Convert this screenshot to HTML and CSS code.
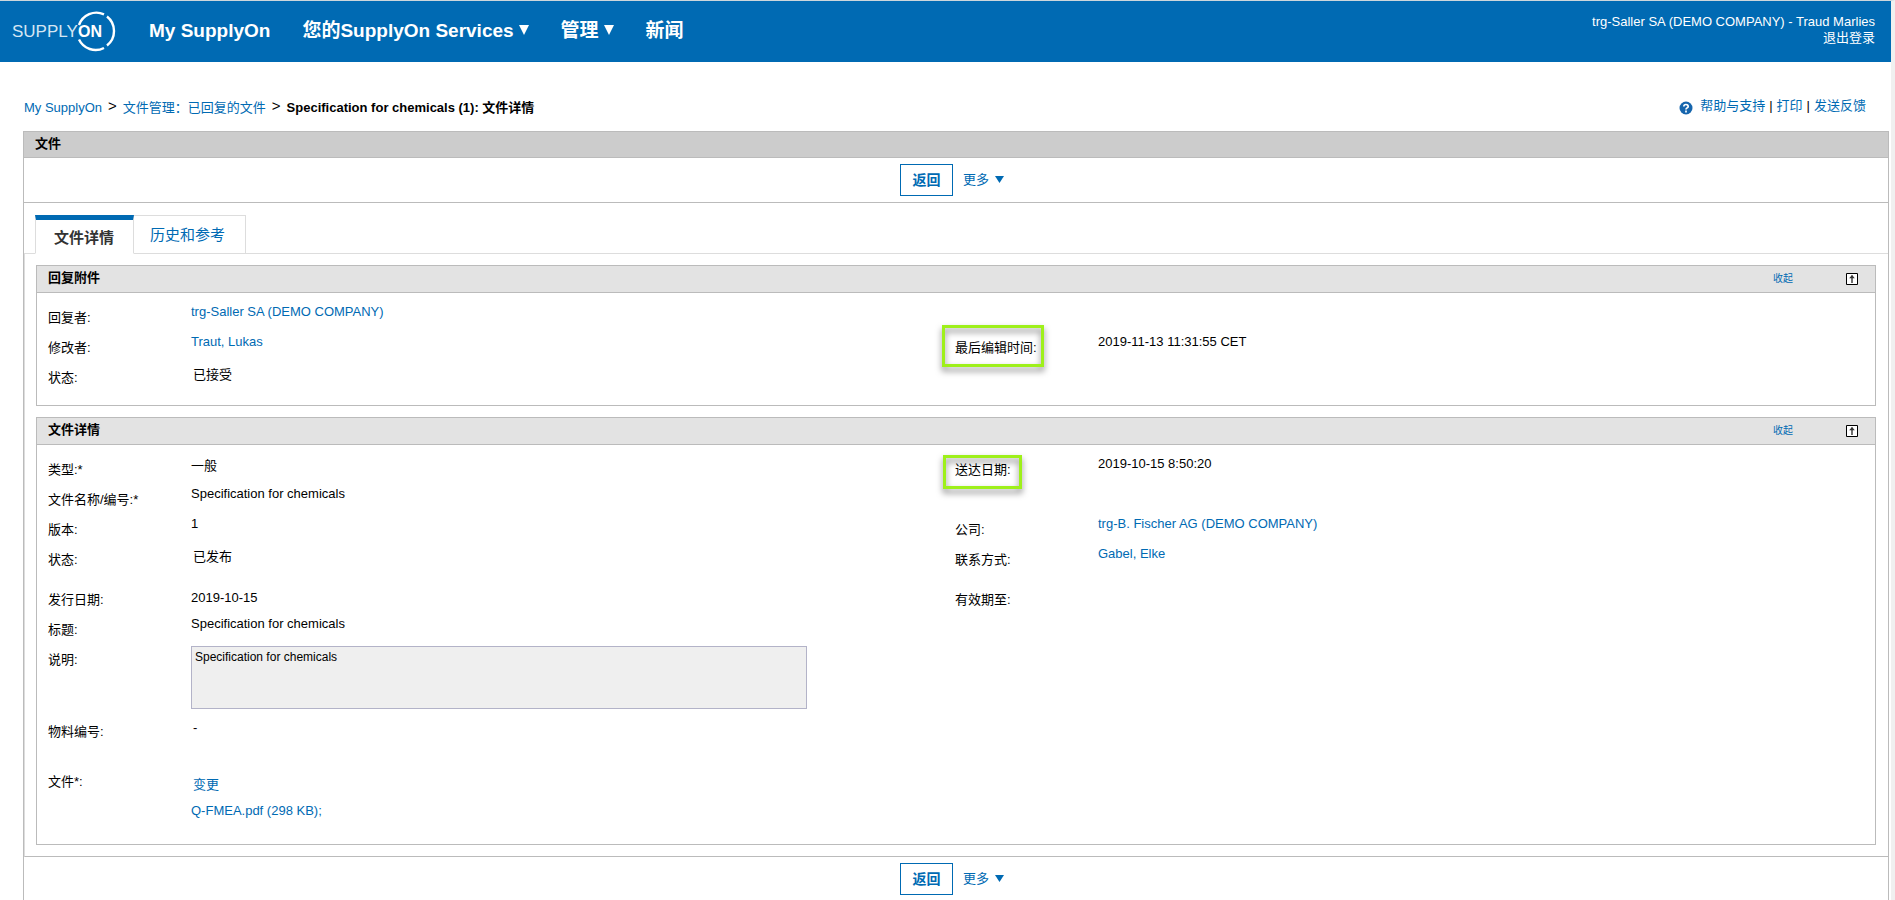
FILE: index.html
```html
<!DOCTYPE html>
<html lang="zh-CN">
<head>
<meta charset="utf-8">
<meta name="viewport" content="width=device-width, initial-scale=1">
<title>文件详情 - SupplyOn</title>
<link rel="stylesheet" href="styles.css">
</head>
<body>
<div class="page">
  <header class="topbar">
    <a class="logo" href="#" aria-label="SupplyOn">
      <svg width="106" height="44" viewBox="0 0 106 44">
        <text class="logo-thin" x="0" y="28">SUPPLY</text>
        <text class="logo-bold" x="66" y="28">ON</text>
        <g fill="none" stroke="#fff" stroke-width="2.4">
          <path d="M67 16A18.500 18.500 0 0 1 92 5.300"/>
          <path d="M95 7.500A18.500 18.500 0 0 1 95 36.500"/>
          <path d="M92 39A18.500 18.500 0 0 1 67 30.500"/>
        </g>
      </svg>
    </a>
    <nav class="mainnav">
      <a href="#">My SupplyOn</a>
      <a href="#">您的SupplyOn Services<svg class="nav-arrow" width="10" height="10" viewBox="0 0 10 10"><path d="M0 0h10L5 10z"/></svg></a>
      <a href="#">管理<svg class="nav-arrow" width="10" height="10" viewBox="0 0 10 10"><path d="M0 0h10L5 10z"/></svg></a>
      <a href="#">新闻</a>
    </nav>
    <div class="account">
      <span>trg-Saller SA (DEMO COMPANY) - Traud Marlies</span>
      <a href="#">退出登录</a>
    </div>
  </header>

  <div class="crumbbar">
    <nav class="crumbs">
      <a href="#">My SupplyOn</a><span class="sep">&gt;</span><a href="#">文件管理：已回复的文件</a><span class="sep">&gt;</span><strong>Specification for chemicals (1): 文件详情</strong>
    </nav>
    <div class="help">
      <svg class="help-icon" width="14" height="14" viewBox="0 0 14 14">
        <circle cx="7" cy="7" r="6.500" fill="#1565ad"/>
        <path d="M4.800 5.600C4.800 2.800 9.200 2.900 9.200 5.400 9.200 6.900 7 6.800 7 8.400M7 9.600v1.800" fill="none" stroke="#fff" stroke-width="1.700"/>
      </svg>
      <a href="#">帮助与支持</a><span class="bar">|</span><a href="#">打印</a><span class="bar">|</span><a href="#">发送反馈</a>
    </div>
  </div>

  <main class="frame">
    <h1 class="frame-title">文件</h1>
    <div class="actions">
      <button class="btn" type="button">返回</button>
      <a class="more" href="#">更多<svg width="9" height="7" viewBox="0 0 9 7"><path d="M0 0h9L4.500 7z"/></svg></a>
    </div>

    <div class="tabs" role="tablist">
      <button class="tab tab-active" type="button" role="tab" aria-selected="true">文件详情</button>
      <button class="tab" type="button" role="tab" aria-selected="false">历史和参考</button>
    </div>

    <div class="content">
      <section class="panel">
        <div class="panel-head">
          <h2>回复附件</h2>
          <a class="collapse" href="#">收起</a>
          <button class="to-top" type="button" aria-label="返回顶部"><svg width="12" height="12" viewBox="0 0 12 12"><path d="M.5.5h11v11H.5z" fill="#fff" stroke="#000"/><path d="M6 2.500v7.500" stroke="#333" stroke-width="1.400"/><path d="M3.200 5.200L6 2l2.800 3.200z" fill="#333"/></svg></button>
        </div>
        <div class="rows">
          <div class="row">
            <div class="field"><span class="label">回复者:</span><a class="value" href="#">trg-Saller SA (DEMO COMPANY)</a></div>
          </div>
          <div class="row">
            <div class="field"><span class="label">修改者:</span><a class="value" href="#">Traut, Lukas</a></div>
            <div class="field"><span class="label">最后编辑时间:<i class="mark mark-edit"></i></span><span class="value">2019-11-13 11:31:55 CET</span></div>
          </div>
          <div class="row">
            <div class="field"><span class="label">状态:</span><span class="value value-status">已接受</span></div>
          </div>
        </div>
      </section>

      <section class="panel">
        <div class="panel-head">
          <h2>文件详情</h2>
          <a class="collapse" href="#">收起</a>
          <button class="to-top" type="button" aria-label="返回顶部"><svg width="12" height="12" viewBox="0 0 12 12"><path d="M.5.5h11v11H.5z" fill="#fff" stroke="#000"/><path d="M6 2.500v7.500" stroke="#333" stroke-width="1.400"/><path d="M3.200 5.200L6 2l2.800 3.200z" fill="#333"/></svg></button>
        </div>
        <div class="rows">
          <div class="row">
            <div class="field"><span class="label">类型:*</span><span class="value value-low">一般</span></div>
            <div class="field"><span class="label">送达日期:<i class="mark mark-date"></i></span><span class="value">2019-10-15 8:50:20</span></div>
          </div>
          <div class="row">
            <div class="field"><span class="label">文件名称/编号:*</span><span class="value">Specification for chemicals</span></div>
          </div>
          <div class="row">
            <div class="field"><span class="label">版本:</span><span class="value">1</span></div>
            <div class="field"><span class="label">公司:</span><a class="value" href="#">trg-B. Fischer AG (DEMO COMPANY)</a></div>
          </div>
          <div class="row row-status">
            <div class="field"><span class="label">状态:</span><span class="value value-status">已发布</span></div>
            <div class="field"><span class="label">联系方式:</span><a class="value" href="#">Gabel, Elke</a></div>
          </div>
          <div class="row">
            <div class="field"><span class="label">发行日期:</span><span class="value value-date">2019-10-15</span></div>
            <div class="field"><span class="label">有效期至:</span><span class="value"></span></div>
          </div>
          <div class="row">
            <div class="field"><span class="label">标题:</span><span class="value">Specification for chemicals</span></div>
          </div>
          <div class="row row-desc">
            <div class="field"><label class="label" for="desc">说明:</label><textarea id="desc" class="desc" readonly>Specification for chemicals</textarea></div>
          </div>
          <div class="row row-material">
            <div class="field"><span class="label">物料编号:</span><span class="value value-dash">-</span></div>
          </div>
          <div class="row row-file">
            <div class="field"><span class="label">文件*:</span><div class="files"><a class="change" href="#">变更</a><a href="#">Q-FMEA.pdf (298 KB);</a></div></div>
          </div>
        </div>
      </section>
    </div>

    <div class="actions actions-bottom">
      <button class="btn" type="button">返回</button>
      <a class="more" href="#">更多<svg width="9" height="7" viewBox="0 0 9 7"><path d="M0 0h9L4.500 7z"/></svg></a>
    </div>
  </main>
</div>
</body>
</html>
```

FILE: styles.css
```css
* { box-sizing: border-box; }

body {
  margin: 0;
  background: #fff;
  color: #000;
  font: 13px/17px "Liberation Sans", "Noto Sans CJK SC", sans-serif;
}

a { color: #006ab3; text-decoration: none; }
button { font-family: inherit; cursor: pointer; }
svg { display: block; flex: none; }

.page {
  display: flex;
  flex-direction: column;
  min-height: 100vh;
  border-top: 1px solid #ccd6dc;
  border-right: 4px solid #f0f0f0;
}

/* Top bar */
.topbar {
  display: flex;
  height: 61px;
  padding: 0 16px 0 12px;
  background: #006ab3;
}
.logo { margin-top: 8px; }
.logo-thin, .logo-bold { fill: #fff; font-size: 17px; }
.logo-thin { fill: #d5e6f3; }
.logo-bold { font-size: 16px; font-weight: bold; }
.mainnav {
  display: flex;
  gap: 32px;
  margin-left: 31px;
  font-size: 19px;
  font-weight: bold;
  line-height: 60px;
}
.mainnav a { display: flex; color: #fff; }
.nav-arrow { margin: 24px 0 0 5px; fill: #fff; }
.account {
  display: flex;
  flex-direction: column;
  align-items: flex-end;
  margin-left: auto;
  padding-top: 13px;
  color: #fff;
  line-height: 16px;
}
.account a { color: #fff; }

/* Breadcrumbs */
.crumbbar {
  display: flex;
  justify-content: space-between;
  height: 69px;
  padding: 35px 25px 0 24px;
}
.crumbs, .help { display: flex; }
.crumbs { padding-top: 2px; }
.sep { padding: 0 6px; font-size: 15px; line-height: 14px; }
.bar { padding: 0 4px; }
.help-icon { margin: 4px 7px 0 0; }

/* Frame */
.frame {
  flex: 1;
  margin: 0 2px 0 23px;
  border: 1px solid #bbb;
  border-bottom: 0;
}
.frame-title {
  height: 26px;
  margin: 0;
  padding-left: 11px;
  border-bottom: 1px solid #bbb;
  background: #ccc;
  font-size: 13px;
  line-height: 24px;
}
.actions {
  display: flex;
  justify-content: center;
  gap: 10px;
  height: 45px;
  padding: 6px 8px 6px 0;
  border-bottom: 1px solid #bbb;
}
.actions-bottom { height: 43px; border-bottom: 0; }
.btn {
  width: 53px;
  height: 32px;
  padding: 0 0 3px;
  border: 1px solid #006ab3;
  background: #fff;
  color: #006ab3;
  font-size: 14px;
  font-weight: bold;
}
.more { display: flex; gap: 6px; line-height: 32px; }
.more svg { margin-top: 12px; fill: #006ab3; }

/* Tabs */
.tabs {
  display: flex;
  height: 51px;
  padding: 12px 0 0 11px;
  border-bottom: 1px solid #ddd;
}
.tab {
  height: 39px;
  padding: 0 20px 2px 16px;
  border: 1px solid #ddd;
  border-left: 0;
  background: #fff;
  color: #006ab3;
  font-size: 15px;
}
.tab-active {
  padding: 0 19px 0 18px;
  border-top: 5px solid #006ab3;
  border-left: 1px solid #ddd;
  border-bottom-color: #fff;
  color: #333;
  font-weight: bold;
}

/* Panels */
.content {
  display: grid;
  gap: 11px;
  padding: 11px 12px 11px 11px;
  border-bottom: 1px solid #bbb;
  border-left: 1px solid #ddd;
}
.panel { border: 1px solid #bbb; }
.panel-head {
  display: flex;
  height: 27px;
  padding: 0 17px 0 11px;
  border-bottom: 1px solid #bbb;
  background: #e3e3e3;
}
.panel-head h2 { margin: 0 auto 0 0; font-size: 13px; line-height: 24px; }
.collapse { margin-right: 53px; font-size: 10px; line-height: 26px; }
.to-top { height: 12px; margin-top: 7px; padding: 0; border: 0; background: none; }

.rows { padding: 10px 13px 12px 11px; }
.row { display: grid; grid-template-columns: 1fr 1fr; height: 30px; }
.row-status { height: 40px; }
.row-desc { height: 72px; }
.row-material { height: 50px; }
.row-file { height: 65px; }
.field { display: grid; grid-template-columns: 143px 1fr; align-items: start; }
.label { position: relative; justify-self: start; line-height: 30px; }
.value-low { padding-top: 2px; }
.value-date { padding-top: 4px; }
.value-status { padding: 3px 2px 0; }
.value-dash { padding: 2px 2px 0; }

.desc {
  width: 616px;
  height: 63px;
  margin-top: 1px;
  padding: 3px;
  border: 1px solid #b3b3c8;
  background: #efefef;
  color: #000;
  font: 12px/15px "Liberation Sans", "Noto Sans CJK SC", sans-serif;
  resize: none;
}
.files { display: grid; gap: 9px; padding-top: 9px; }
.change { padding-left: 2px; }

/* Highlight outlines drawn over the labels */
.mark {
  position: absolute;
  border: 3px solid #9ef01a;
  filter: drop-shadow(0 4px 3px rgba(0, 0, 0, 0.5));
}
.mark-edit { inset: -8px -7px -4px -13px; }
.mark-date { inset: 0 -11px -4px -12px; }
```
